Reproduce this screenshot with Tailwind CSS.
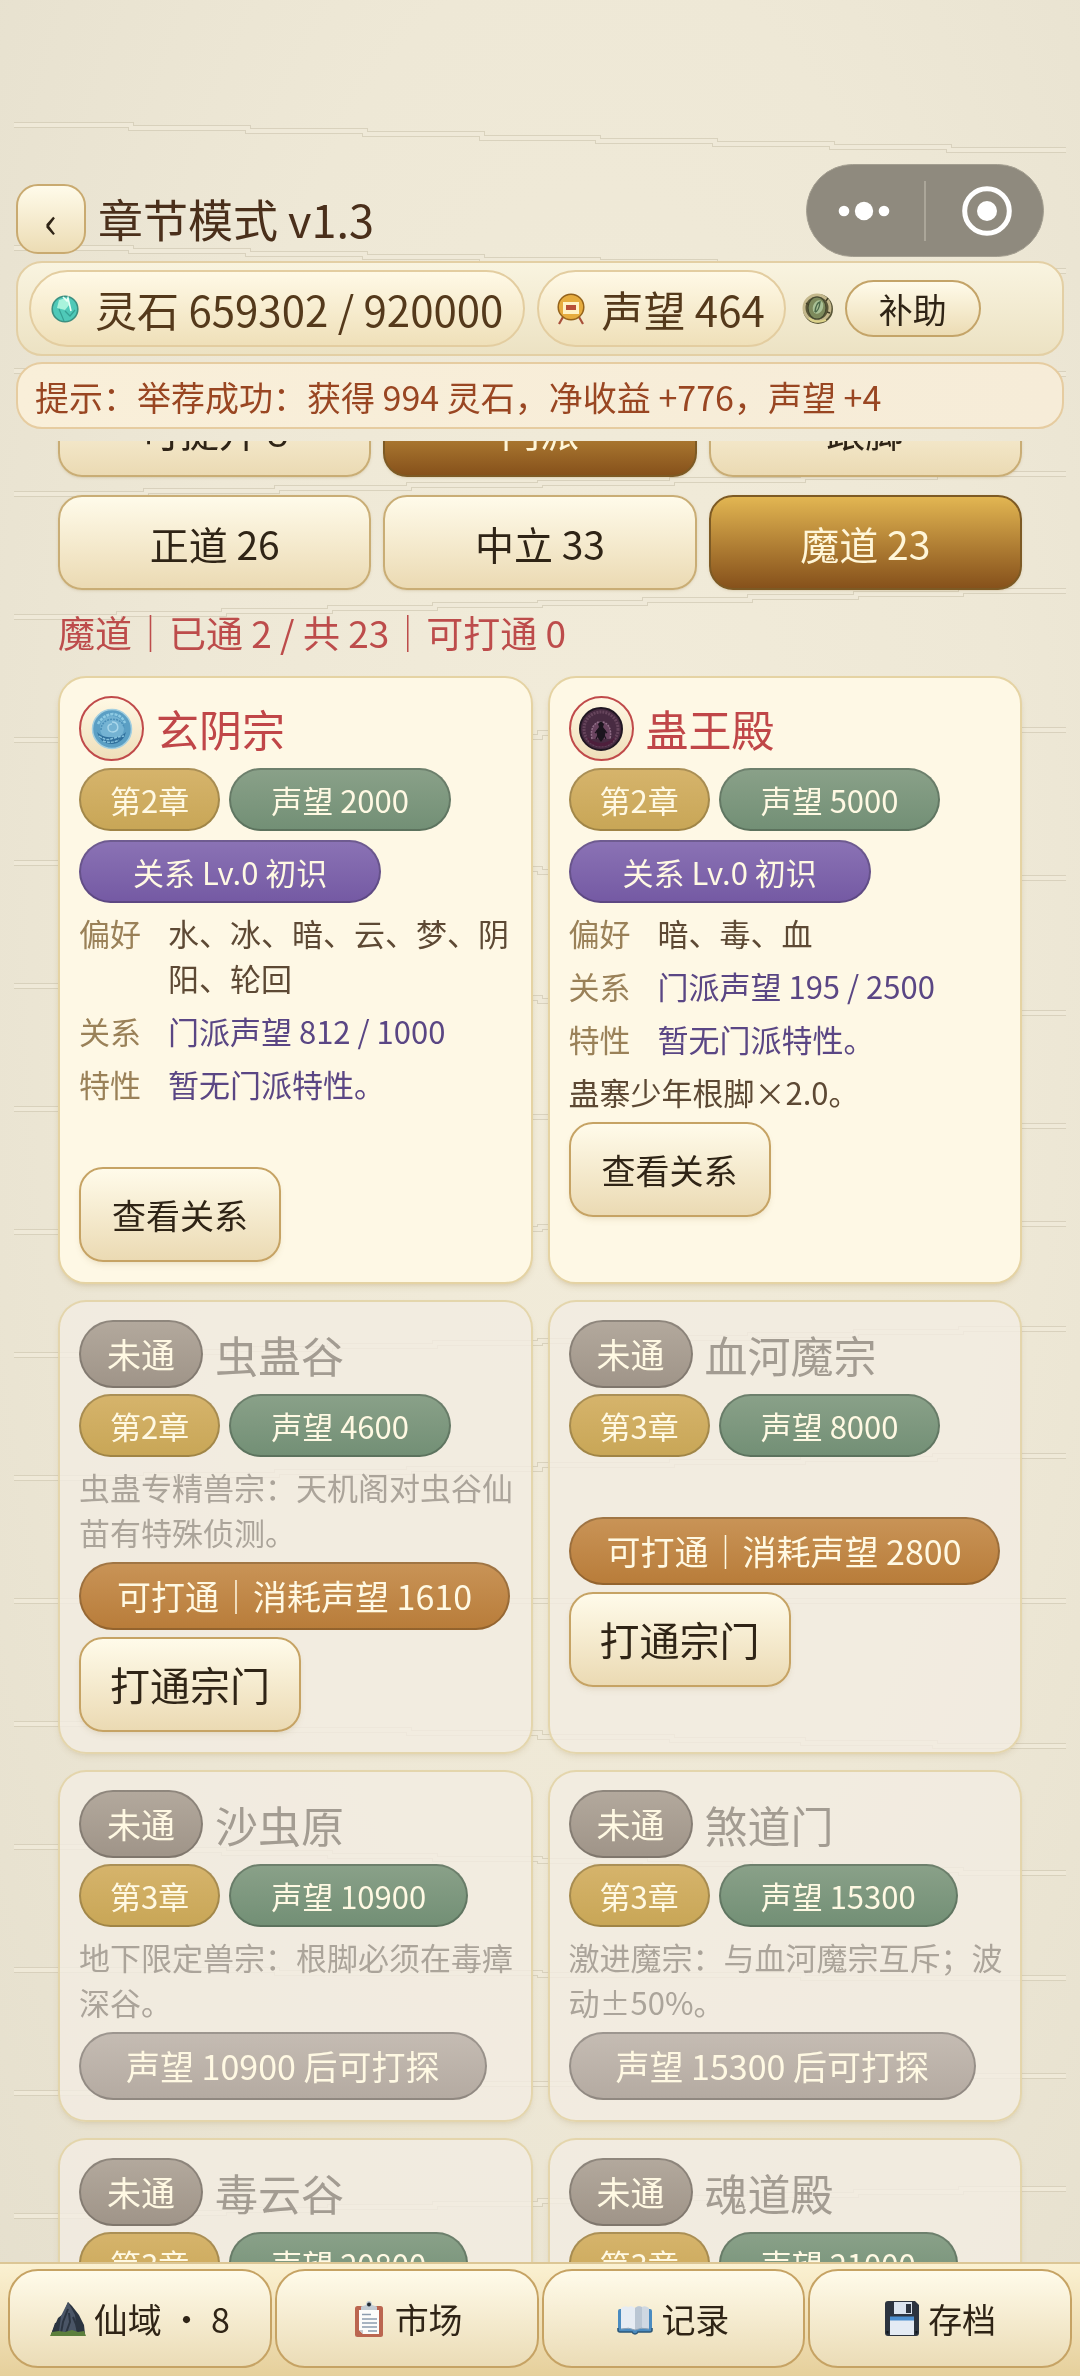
<!DOCTYPE html>
<html lang="zh-CN">
<head>
  <meta charset="UTF-8" />
  <meta name="viewport" content="width=device-width, initial-scale=1" />
  <title>章节模式 v1.3</title>
  <script src="https://cdn.jsdelivr.net/npm/@tailwindcss/browser@4"></script>
</head>
<body class="bg-[#ece6d4] font-['Noto_Sans_CJK_SC',sans-serif] text-[#2f2416]">

  <!-- Paper background -->
  <div class="fixed inset-0 -z-10 bg-radial-[at_55%_40%] from-[#f2ecda] via-[#eee8d6] to-[#e5dfcd]">
    <svg id="paper-lines" class="w-full h-full" viewBox="0 0 1080 2376" preserveAspectRatio="none" fill="none" aria-hidden="true"></svg>
  </div>

  <div class="h-screen flex flex-col overflow-hidden">

    <!-- Header -->
    <header class="pt-[164px] px-4 flex flex-col">
      <div class="flex justify-between items-end mb-1 pr-5">
        <div class="flex items-center gap-3 pb-[3px]">
          <button type="button" aria-label="返回" class="w-[70px] h-[70px] rounded-[22px] border-2 border-[#c9aa70] bg-linear-to-b from-[#fffbea] to-[#ecdcb4] text-[44px] leading-[66px] text-[#2f2416]">‹</button>
          <h1 class="text-[45px] leading-[70px] text-[#4a2f1b]">章节模式 v1.3</h1>
        </div>
        <div class="flex items-center w-[238px] h-[93px] rounded-full border border-[#a39e90] bg-[#8f8a7e]">
          <button type="button" aria-label="更多" class="flex-1 h-full pr-1 flex items-center justify-center">
            <svg width="52" height="20" viewBox="0 0 52 20" fill="#fff"><circle cx="6" cy="10" r="5.3" /><circle cx="26" cy="10" r="9.2" /><circle cx="46" cy="10" r="5.3" /></svg>
          </button>
          <span class="w-[2px] h-[60px] bg-[#aba699]"></span>
          <button type="button" aria-label="关闭" class="flex-1 h-full pl-1 flex items-center justify-center">
            <svg width="52" height="52" viewBox="0 0 52 52"><circle cx="26" cy="26" r="22.3" fill="none" stroke="#fff" stroke-width="5" /><circle cx="26" cy="26" r="10" fill="#fff" /></svg>
          </button>
        </div>
      </div>

      <!-- Resources -->
      <div class="h-[95px] mb-[6px] px-[11px] flex items-center rounded-[26px] border-2 border-[#e3cfa4] bg-linear-to-b from-[#f9f4e0] to-[#ece2c3]">
        <div class="h-[77px] px-5 mr-3 flex items-center gap-4 rounded-full border-2 border-[#e3cda0] bg-linear-to-b from-[#fff9e6] to-[#efe0b9]">
          <svg width="28" height="28" viewBox="0 0 28 28" aria-hidden="true">
            <circle cx="14" cy="14" r="12.8" fill="#4fc9b8" stroke="#3c8f80" stroke-width="1.6" />
            <path d="M6 13 8 5 15 3 19 9 14 15Z" fill="#a9f3dc" />
            <path d="M12 2 16 6 17 3 20 16" fill="none" stroke="#e9fff6" stroke-width="1.6" />
            <path d="M8 14 13 26M14 16l5 5 5-6" fill="none" stroke="#35a093" stroke-width="1.2" />
          </svg>
          <span class="text-[42px] leading-[60px] text-[#54391b]">灵石 659302 / 920000</span>
        </div>
        <div class="h-[77px] pl-[18px] pr-[19px] mr-4 flex items-center gap-4 rounded-full border-2 border-[#e3cda0] bg-linear-to-b from-[#fff9e6] to-[#efe0b9]">
          <svg width="28" height="32" viewBox="0 0 28 32" aria-hidden="true">
            <path d="m6 24-4 7M22 24l4 7" stroke="#a8503a" stroke-width="2.2" />
            <circle cx="14" cy="14" r="12.8" fill="#e6ac3e" stroke="#94631c" stroke-width="1.5" />
            <rect x="6" y="9" width="16" height="12" fill="#fff2c4" />
            <rect x="9" y="12" width="10" height="5" fill="#b84f38" />
          </svg>
          <span class="text-[42px] leading-[60px] text-[#54391b]">声望 464</span>
        </div>
        <svg class="mr-[11px]" width="32" height="32" viewBox="0 0 32 32" aria-hidden="true">
          <circle cx="16" cy="16" r="15" fill="#5a5738" />
          <circle cx="15" cy="15" r="13" fill="none" stroke="#c4b88c" stroke-width="3" />
          <ellipse cx="15" cy="15" rx="9" ry="11" fill="#7d8a5c" stroke="#454930" stroke-width="1.2" />
          <ellipse cx="16" cy="14" rx="5" ry="7" fill="#a9c095" transform="rotate(20 16 14)" />
          <path d="M13 19q1-9 5-10-1 9-5 10" fill="none" stroke="#4d6a4a" stroke-width="1.4" />
          <path d="M7 25q6 6 17 2" fill="none" stroke="#dcd38a" stroke-width="2.2" />
          <path d="M4 10l3 2M26 5l-2 3M28 20l-3-1" stroke="#45412a" stroke-width="1.4" />
        </svg>
        <button type="button" class="w-[136px] h-[57px] rounded-full border-2 border-[#c4a468] bg-linear-to-b from-[#fffbea] to-[#ecdcb4] text-[34px] leading-[50px]">补助</button>
      </div>

      <!-- Notice -->
      <p class="h-[67px] mb-3 px-[17px] rounded-[26px] border-2 border-[#e6cca0] bg-linear-to-r from-[#f9efd9] to-[#f6ecd8] text-[34px] leading-[66px] text-[#994622] whitespace-nowrap">提示：举荐成功：获得 994 灵石，净收益 +776，声望 +4</p>
    </header>

    <!-- Scrolled list -->
    <main class="flex-1 min-h-0 overflow-hidden px-[58px]">
      <div class="-mt-[59px]">
        <div id="tabs" class="grid grid-cols-3 gap-x-3 gap-y-[18px]"></div>
        <p class="mt-[14px] mb-[15px] text-[37px] leading-[57px] text-[#bd4c4b]">魔道｜已通 2 / 共 23｜可打通 0</p>
        <div id="sects" class="grid grid-cols-2 gap-x-[15px] gap-y-4 pb-8"></div>
      </div>
    </main>

    <!-- Bottom nav -->
    <nav class="h-[114px] px-2 pt-[5px] pb-2 grid grid-cols-4 gap-[3px] border-t-2 border-[#dcc695] bg-linear-to-b from-[#fbf1d2] to-[#e6d09c]">
      <button type="button" class="flex items-center justify-center gap-2 rounded-[30px] border-2 border-[#c6a364] bg-linear-to-b from-[#fffbea] to-[#ebdcb6] text-[34px] leading-[50px]">
        <svg width="36" height="36" viewBox="0 0 36 36" aria-hidden="true">
          <path d="M1 33 8 17l5-4 5-12 4 4 7 9 5 10 1 9Z" fill="#2b3440" />
          <path d="M18 1 11 15 9 31h18L25 14Z" fill="#4a5566" />
          <path d="m18 8-5 13-2 11m8-20 1 9-4 11m7-16 3 7 2 9M6 22l-3 9" fill="none" stroke="#2b3440" stroke-width="2" />
          <path d="M0 35 2 31l7-1 6 1 7-2 6 2 6-1 2 5Z" fill="#5c7f3d" />
        </svg>
        <span>仙域 ・ 8</span>
      </button>
      <button type="button" class="flex items-center justify-center gap-2 rounded-[30px] border-2 border-[#c6a364] bg-linear-to-b from-[#fffbea] to-[#ebdcb6] text-[34px] leading-[50px]">
        <svg width="36" height="36" viewBox="0 0 36 36" aria-hidden="true">
          <rect x="4" y="5" width="28" height="31" rx="2.5" fill="#bb6650" />
          <path d="M8 9h20v24H12l-4-4Z" fill="#fcfcfa" />
          <path d="m8 29 4 4v-4Z" fill="#c9ccd0" />
          <path d="M11 13.5h9M11 18h15M11 22h15M11 26h15M17 30h9" stroke="#8b9cae" stroke-width="1.5" />
          <path d="M10 9V6q0-1 2-1l3-1q0-4 3-4t3 4l3 1q2 0 2 1v3Z" fill="#c3ccd3" />
          <circle cx="18" cy="3.6" r="2" fill="#222b33" />
        </svg>
        <span>市场</span>
      </button>
      <button type="button" class="flex items-center justify-center gap-2 rounded-[30px] border-2 border-[#c6a364] bg-linear-to-b from-[#fffbea] to-[#ebdcb6] text-[34px] leading-[50px]">
        <svg width="36" height="36" viewBox="0 0 36 36" aria-hidden="true">
          <path d="M3 8h30q2 0 2 2v19q0 2-2 2H21q-1 2-3 2t-3-2H3q-2 0-2-2V10q0-2 2-2Z" fill="#4a8bc0" />
          <path d="M1 27v2q0 2 2 2h12q1 2 3 2t3-2h12q2 0 2-2v-2" fill="none" stroke="#2d5878" stroke-width="1.6" />
          <path d="M4 7q4-3 7-1 4-2 7 1v22q-6-3-14-1Z" fill="#e6ecf3" />
          <path d="M32 7q-4-3-7-1-4-2-7 1v22q6-3 14-1Z" fill="#cfd8e2" />
          <path d="M25 6q-4-2-7 1v22q3-2 7-2Z" fill="#bac6d3" />
          <path d="M4 28q8-2 14 1 6-3 14-1" fill="none" stroke="#8fa3b6" stroke-width="1" />
        </svg>
        <span>记录</span>
      </button>
      <button type="button" class="flex items-center justify-center gap-2 rounded-[30px] border-2 border-[#c6a364] bg-linear-to-b from-[#fffbea] to-[#ebdcb6] text-[34px] leading-[50px]">
        <svg width="36" height="36" viewBox="0 0 36 36" aria-hidden="true">
          <path d="M4 0h27l4 4v28q0 3-3 3H4q-3 0-3-3V3q0-3 3-3Z" fill="#2c343f" />
          <path d="M10 1h18v12H10Z" fill="#dbe4ee" />
          <path d="M22 3h5v9h-5Z" fill="#2c343f" />
          <path d="M6 16h24v18H6Z" fill="#e4ebf4" />
          <path d="M6 15.500h24v4H6Z" fill="#4c8fcf" />
          <path d="M2.500 30h2v2.500h-2zM31.500 30h2v2.500h-2z" fill="#11161d" />
        </svg>
        <span>存档</span>
      </button>
    </nav>
  </div>

  <script>
    const tabs = [
      { name: "可提升 8" }, { name: "门派", on: true }, { name: "跟脚" },
      { name: "正道 26" }, { name: "中立 33" }, { name: "魔道 23", on: true }
    ];

    const iceIcon = `
      <svg width="42" height="42" viewBox="0 0 42 42" aria-hidden="true">
        <circle cx="21" cy="21" r="19.500" fill="#5b9fc4" stroke="#a3cfe0" stroke-width="1.500" />
        <circle cx="21" cy="20" r="12" fill="#74b3d3" />
        <path d="M6 24q4 13 16 12 11-2 13-12-5 6-14 5-10 1-15-5Z" fill="#2f6f9c" />
        <path d="M7 16q5-9 15-10 9 1 12 9" fill="none" stroke="#8ecbe4" stroke-width="2.500" stroke-dasharray="3 1" />
        <path d="M21 14c7 0 8 9 1 10-6 0-7-8-1-8" fill="none" stroke="#a8d6ea" stroke-width="1.500" />
        <path d="M10 22c0-14 22-14 23-2" fill="none" stroke="#4a8fb8" stroke-width="1.500" stroke-dasharray="2 1" />
        <path d="M8 28q7 5 12 3t13-3M12 33q8 3 16-1" fill="none" stroke="#86c2dd" stroke-width="1.500" stroke-dasharray="3 1" />
      </svg>`;

    const guIcon = `
      <svg width="44" height="44" viewBox="0 0 44 44" aria-hidden="true">
        <circle cx="22" cy="22" r="21" fill="#482b42" stroke="#211722" stroke-width="2" />
        <circle cx="22" cy="22" r="17" fill="none" stroke="#66455c" stroke-width="3" stroke-dasharray="2 1" />
        <path d="M13 32C8 9 36 9 31 32" fill="#6a4460" stroke="#927089" stroke-width="1.500" stroke-dasharray="2 1" />
        <path d="M7 29q15 14 30 0l-4 7q-11 7-22 0Z" fill="#4e1f3c" />
        <path d="M22 14l3 3-1 3 3 4-2 7-3 4-3-4-2-7 3-4-1-3Z" fill="#1b141d" />
        <path d="m19 23-3 3m3 2-2 4m8-9 3 3m-3 2 2 4" stroke="#1b141d" stroke-width="1.200" />
      </svg>`;

    const sects = [
      { name: "玄阴宗", open: true, icon: iceIcon, chapter: "第2章", cost: "声望 2000", likes: "水、冰、暗、云、梦、阴阳、轮回", relation: "门派声望 812 / 1000", desc: "" },
      { name: "蛊王殿", open: true, icon: guIcon, chapter: "第2章", cost: "声望 5000", likes: "暗、毒、血", relation: "门派声望 195 / 2500", desc: "蛊寨少年根脚×2.0。" },
      { name: "虫蛊谷", chapter: "第2章", cost: "声望 4600", desc: "虫蛊专精兽宗：天机阁对虫谷仙苗有特殊侦测。", ready: "可打通｜消耗声望 1610" },
      { name: "血河魔宗", chapter: "第3章", cost: "声望 8000", desc: "", ready: "可打通｜消耗声望 2800" },
      { name: "沙虫原", chapter: "第3章", cost: "声望 10900", desc: "地下限定兽宗：根脚必须在毒瘴深谷。", locked: "声望 10900 后可打探" },
      { name: "煞道门", chapter: "第3章", cost: "声望 15300", desc: "激进魔宗：与血河魔宗互斥；波动±50%。", locked: "声望 15300 后可打探" },
      { name: "毒云谷", chapter: "第3章", cost: "声望 20800", desc: "", locked: "声望 20800 后可打探" },
      { name: "魂道殿", chapter: "第3章", cost: "声望 21000", desc: "", locked: "声望 21000 后可打探" }
    ];

    const smallPill = "h-[63px] inline-flex items-center justify-center rounded-full border-2 border-black/20 text-[31px] leading-[46px] text-[#fff9e3] whitespace-nowrap bg-linear-to-b bg-origin-border";
    const bigPill = "h-[68px] inline-flex items-center justify-center rounded-full border-2 border-black/20 text-[34px] leading-[50px] text-[#fff9e3] whitespace-nowrap bg-linear-to-b bg-origin-border";
    const button = "h-[95px] rounded-3xl border-2 border-[#c6a364] bg-linear-to-b from-[#fffbea] to-[#ebdab3] shadow-md shadow-[#8a6a2a]/10";

    function pills(s) {
      return `
        <div class="flex gap-[9px]">
          <span class="${smallPill} px-[29px] from-[#d6b46c] to-[#c8a656]">${s.chapter}</span>
          <span class="${smallPill} px-10 from-[#8aa189] to-[#728f75]">${s.cost}</span>
        </div>`;
    }

    function openCard(s) {
      return `
        <article class="flex flex-col items-start pt-[18px] pb-5 pl-[19px] pr-[15px] rounded-[28px] border-2 border-[#e5d3a3] bg-[#fef8e5] shadow-md shadow-[#8a6a2a]/15">
          <div class="flex items-center gap-3 mb-[7px]">
            <span class="w-[65px] h-[65px] flex items-center justify-center rounded-full border-2 border-[#c04a4a] bg-linear-to-b from-[#fff8e4] to-[#efdfba]">${s.icon}</span>
            <h2 class="text-[43px] leading-[65px] text-[#c04648]">${s.name}</h2>
          </div>
          ${pills(s)}
          <span class="${smallPill} mt-[9px] px-[52px] from-[#8b73b5] to-[#7459a3]">关系 Lv.0 初识</span>
          <dl class="mt-[7px] mb-2 grid grid-cols-[89px_1fr] gap-y-2 text-[31px] leading-[45px]">
            <dt class="text-[#9a8158]">偏好</dt><dd class="text-[#5d4934]">${s.likes}</dd>
            <dt class="text-[#9a8158]">关系</dt><dd class="text-[#5a4684]">${s.relation}</dd>
            <dt class="text-[#9a8158]">特性</dt><dd class="text-[#5a4684]">暂无门派特性。</dd>
          </dl>
          <p class="min-h-[45px] mb-2 text-[31px] leading-[45px] text-[#5d4934]">${s.desc}</p>
          <button type="button" class="${button} px-[31px] text-[34px] leading-[50px]">查看关系</button>
        </article>`;
    }

    function closedCard(s) {
      const action = s.ready
        ? `<span class="${bigPill} px-9 from-[#c99457] to-[#b87c39]">${s.ready}</span>
           <button type="button" class="${button} mt-[7px] px-[29px] text-[40px] leading-[59px]">打通宗门</button>`
        : `<span class="${bigPill} px-[45px] from-[#c5bcb3] to-[#b4aaa1]">${s.locked}</span>`;
      return `
        <article class="flex flex-col items-start pt-[18px] pb-5 pl-[19px] pr-[15px] rounded-[28px] border-2 border-[#e0cf9f]/80 bg-[#f3ece2]/80 shadow-md shadow-[#8a6a2a]/10">
          <div class="flex items-center gap-3 mb-[6px]">
            <span class="${bigPill} px-[26px] from-[#b3a99d] to-[#9f9488]">未通</span>
            <h2 class="text-[43px] leading-[65px] text-[#a39c92]">${s.name}</h2>
          </div>
          ${pills(s)}
          <p class="min-h-[45px] mt-[7px] mb-2 text-[31px] leading-[45px] text-[#aba49a]">${s.desc}</p>
          ${action}
        </article>`;
    }

    function renderTabs() {
      document.getElementById("tabs").innerHTML = tabs.map(t => `
        <button type="button" class="h-[95px] rounded-3xl border-2 text-[39px] leading-[58px] bg-linear-to-b shadow-sm shadow-[#8a6a2a]/15 ${t.on
          ? "border-[#7d5a24] from-[#e2b652] to-[#86511b] text-[#fff6d8]"
          : "border-[#c9ad75] from-[#fffbea] to-[#ebdab3]"}">${t.name}</button>`).join("");
    }

    function renderSects() {
      document.getElementById("sects").innerHTML = sects.map(s => s.open ? openCard(s) : closedCard(s)).join("");
    }

    // stepped brush lines of the paper, one every 123 units
    function drawPaperLines() {
      let out = "";
      for (let i = 0; i < 18; i++) {
        let y = 125 + i * 123;
        const drift = Math.round(27 * Math.cos((i - 0.45) * 0.952));
        const steps = Math.max(1, Math.round(Math.abs(drift) / 3));
        const run = 1052 / (steps + 1);
        let d = `M14 ${y}`;
        for (let k = 1; k <= steps + 1; k++) {
          d += `H${Math.round(14 + run * k)}`;
          if (k <= steps) { y += drift / steps; d += `V${Math.round(y)}`; }
        }
        out += `<path d="${d}" stroke="#d3ccb6" stroke-opacity=".8" stroke-width="6"/><path d="${d}" stroke="#efe9d8" stroke-width="4"/>`;
      }
      document.getElementById("paper-lines").innerHTML = out;
    }

    drawPaperLines();
    renderTabs();
    renderSects();
  </script>

</body>
</html>
